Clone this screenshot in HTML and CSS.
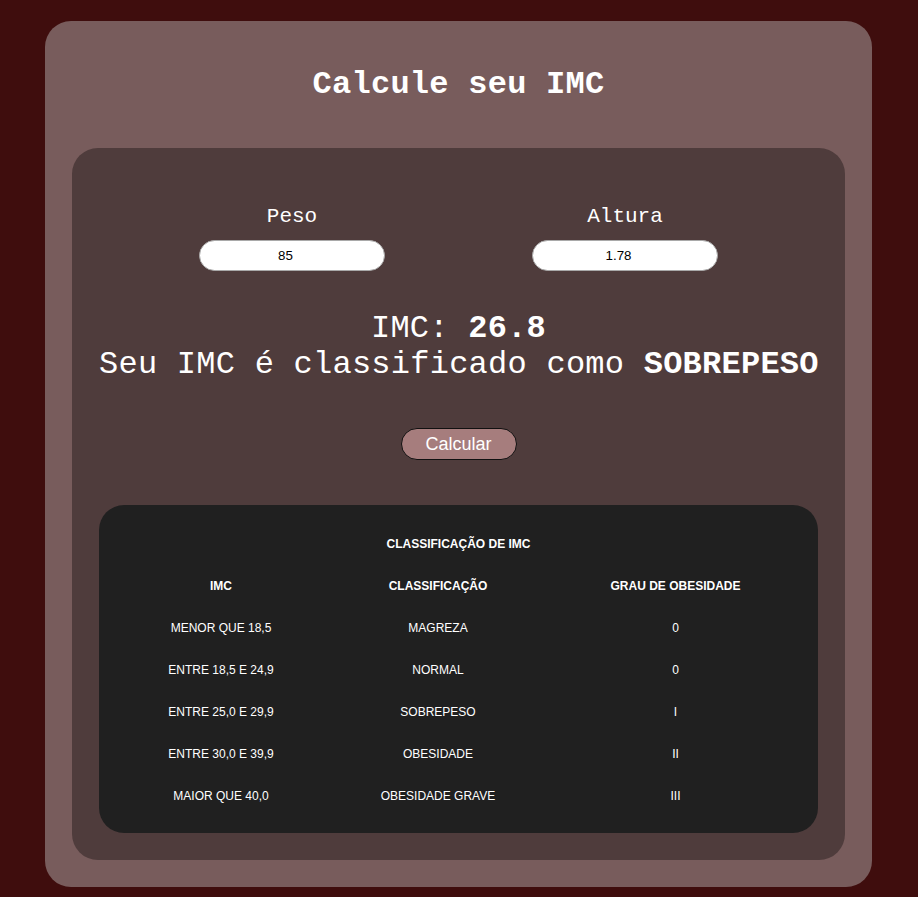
FILE: index.html
```html
<!DOCTYPE html>
<html lang="pt-BR">
<head>
<meta charset="utf-8">
<title>Calcule seu IMC</title>
<link rel="stylesheet" href="styles.css">
</head>
<body>
<main class="outer">
  <h1 class="title">Calcule seu IMC</h1>
  <section class="inner">
    <div class="fields">
      <div class="field">
        <label class="label" for="peso">Peso</label>
        <input class="input" id="peso" type="text" value="85">
      </div>
      <div class="field">
        <label class="label" for="altura">Altura</label>
        <input class="input" id="altura" type="text" value="1.78">
      </div>
    </div>
    <div class="result">
      <p class="result-line">IMC: <strong>26.8</strong></p>
      <p class="result-line">Seu IMC é classificado como <strong>SOBREPESO</strong></p>
    </div>
    <div class="actions">
      <button class="btn" type="button">Calcular</button>
    </div>
    <div class="table-card">
      <table class="table">
        <caption class="caption">CLASSIFICAÇÃO DE IMC</caption>
        <thead>
          <tr><th class="c1">IMC</th><th class="c2">CLASSIFICAÇÃO</th><th class="c3">GRAU DE OBESIDADE</th></tr>
        </thead>
        <tbody>
          <tr><td>MENOR QUE 18,5</td><td>MAGREZA</td><td>0</td></tr>
          <tr><td>ENTRE 18,5 E 24,9</td><td>NORMAL</td><td>0</td></tr>
          <tr><td>ENTRE 25,0 E 29,9</td><td>SOBREPESO</td><td>I</td></tr>
          <tr><td>ENTRE 30,0 E 39,9</td><td>OBESIDADE</td><td>II</td></tr>
          <tr><td>MAIOR QUE 40,0</td><td>OBESIDADE GRAVE</td><td>III</td></tr>
        </tbody>
      </table>
    </div>
  </section>
</main>
</body>
</html>
```
FILE: styles.css
```css
* { box-sizing: border-box; }
html, body { margin: 0; padding: 0; }
body {
  background: #3f0d0d;
  font-family: "Liberation Mono", "Courier New", monospace;
  color: #ffffff;
}
.outer {
  width: 827px;
  margin: 21px 0 0 45px;
  background: #785c5c;
  border-radius: 26px;
  padding: 27px;
}
.title {
  margin: 18px 0 45px;
  font-size: 32px;
  line-height: 37px;
  font-weight: bold;
  text-align: center;
  letter-spacing: 0.25px;
}
.inner {
  background: #4f3c3c;
  border-radius: 26px;
  padding: 57px 27px 27px;
}
.fields {
  display: flex;
  justify-content: center;
  gap: 147px;
}
.field {
  width: 186px;
  display: flex;
  flex-direction: column;
  align-items: center;
}
.label {
  font-size: 21px;
  line-height: 24px;
  margin-bottom: 11px;
}
.input {
  width: 100%;
  height: 31px;
  border: 1px solid #a9a9a9;
  border-radius: 16px;
  background: #ffffff;
  color: #000000;
  text-align: center;
  font-family: "Liberation Sans", Arial, sans-serif;
  font-size: 13.33px;
  padding: 0 13px 0 0;
}
.result {
  margin-top: 40px;
  text-align: center;
}
.result-line {
  margin: 0;
  font-size: 32px;
  line-height: 36px;
  white-space: nowrap;
  letter-spacing: 0.25px;
}
.actions {
  display: flex;
  justify-content: center;
  margin-top: 45px;
}
.btn {
  width: 116px;
  height: 32px;
  border: 1px solid #111111;
  border-radius: 16px;
  background: #a67d7d;
  color: #ffffff;
  font-family: "Liberation Sans", Arial, sans-serif;
  font-size: 18px;
  padding: 0;
}
.table-card {
  margin-top: 45px;
  background: #202020;
  border-radius: 25px;
  padding: 18px 20px 16px;
}
.table {
  width: 679px;
  border-collapse: collapse;
  font-family: "Liberation Sans", Arial, sans-serif;
  font-size: 12px;
  text-align: center;
  table-layout: fixed;
}
.caption {
  height: 42px;
  line-height: 42px;
  font-weight: bold;
}
.table th, .table td {
  height: 42px;
  padding: 0;
  vertical-align: middle;
}
.table th { font-weight: bold; }
.c1 { width: 204px; }
.c2 { width: 230px; }
.c3 { width: 245px; }
```
